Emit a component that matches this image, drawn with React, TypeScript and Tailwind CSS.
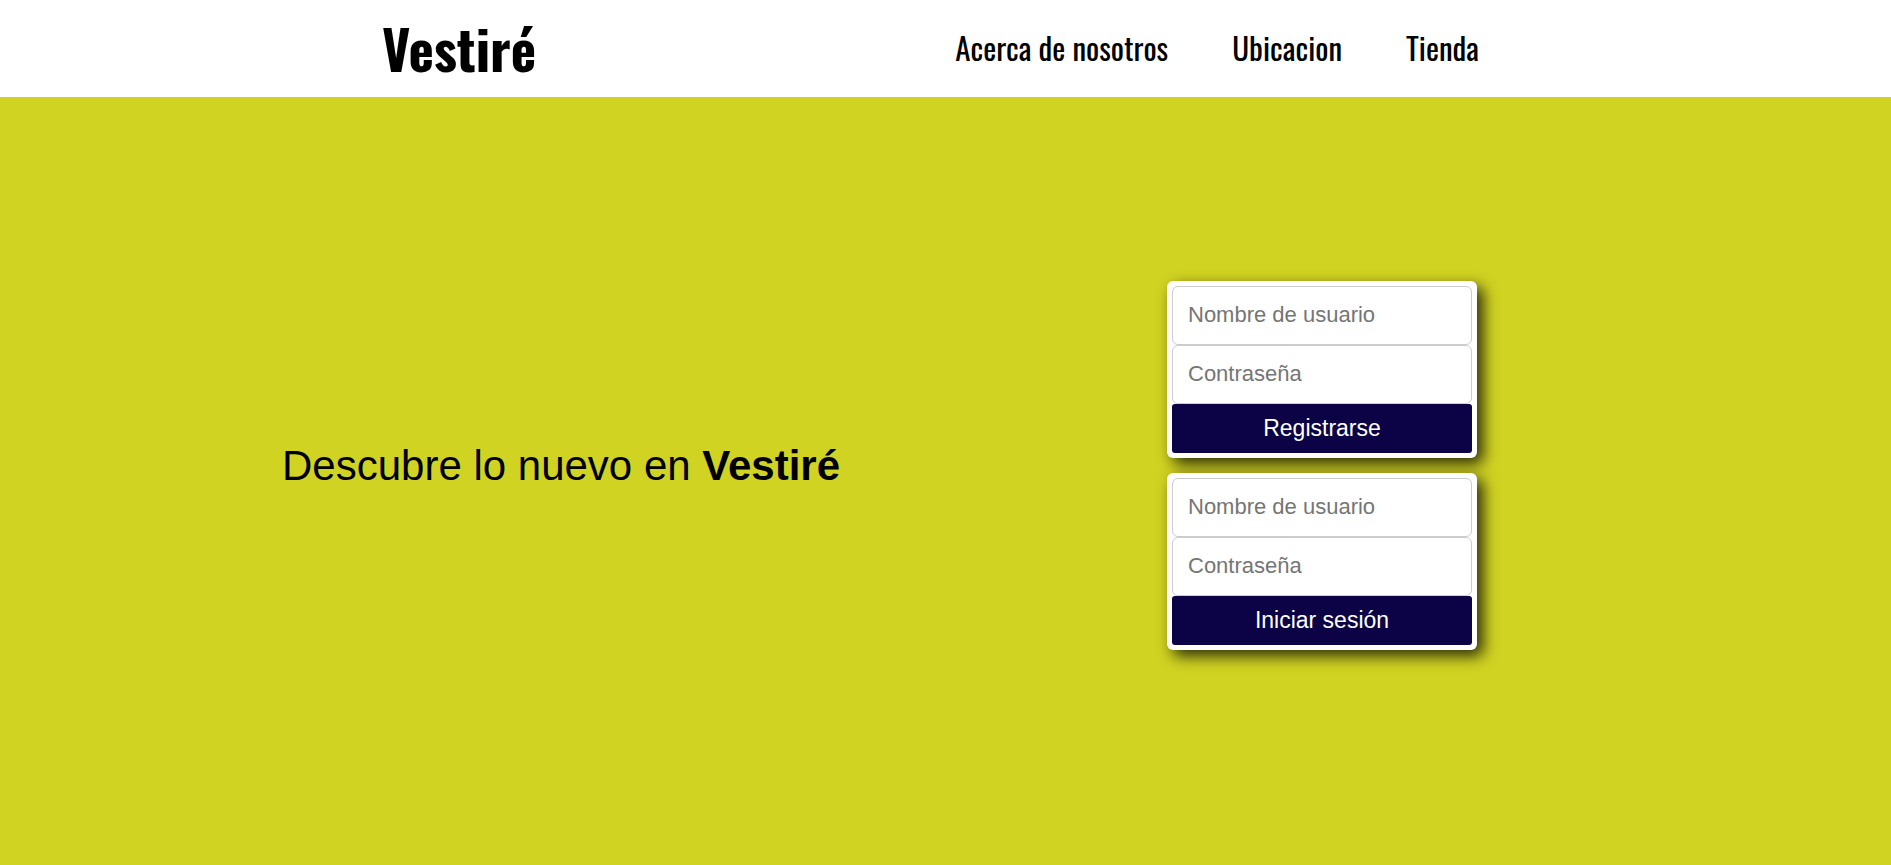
const links = ["Acerca de nosotros", "Ubicacion", "Tienda"];

function AccountForm({ id, action }: { id: string; action: string }) {
  const field =
    "h-[59px] w-full rounded-[6px] border border-[#cccccc] bg-white px-[15px] text-[22px] text-black placeholder:text-[#757575]";
  return (
    <form
      className="flex w-[310px] flex-col rounded-[6px] bg-white p-[5px] shadow-[6px_6px_15px_rgba(0,0,0,0.8)]"
      onSubmit={(event) => event.preventDefault()}
    >
      <input id={`${id}-user`} aria-label="Nombre de usuario" placeholder="Nombre de usuario" className={field} />
      <input
        id={`${id}-password`}
        type="password"
        aria-label="Contraseña"
        placeholder="Contraseña"
        className={field}
      />
      <button type="submit" className="h-[49px] rounded-[3px] bg-[#0b0346] text-[23px] text-white">
        {action}
      </button>
    </form>
  );
}

export default function App() {
  return (
    <div className="flex min-h-screen flex-col bg-white font-['Liberation_Sans',Arial,sans-serif] text-black">
      <header className="flex h-[97px] items-center justify-between pr-[412px] pb-[2px] pl-[382px] font-['Oswald','Roboto_Condensed',sans-serif]">
        <a href="#inicio" className="text-[54px] leading-none font-bold">
          Vestiré
        </a>
        <nav className="flex gap-16 text-[31px]">
          {links.map((label) => (
            <a key={label} href="#" className="whitespace-nowrap">
              {label}
            </a>
          ))}
        </nav>
      </header>
      <main className="flex flex-1 items-center justify-between bg-[#d1d322] pr-[414px] pb-[32px] pl-[282px]">
        <h1 className="text-[42px] whitespace-nowrap">
          Descubre lo nuevo en <strong>Vestiré</strong>
        </h1>
        <div className="flex flex-col gap-[15px]">
          <AccountForm id="register" action="Registrarse" />
          <AccountForm id="login" action="Iniciar sesión" />
        </div>
      </main>
    </div>
  );
}
